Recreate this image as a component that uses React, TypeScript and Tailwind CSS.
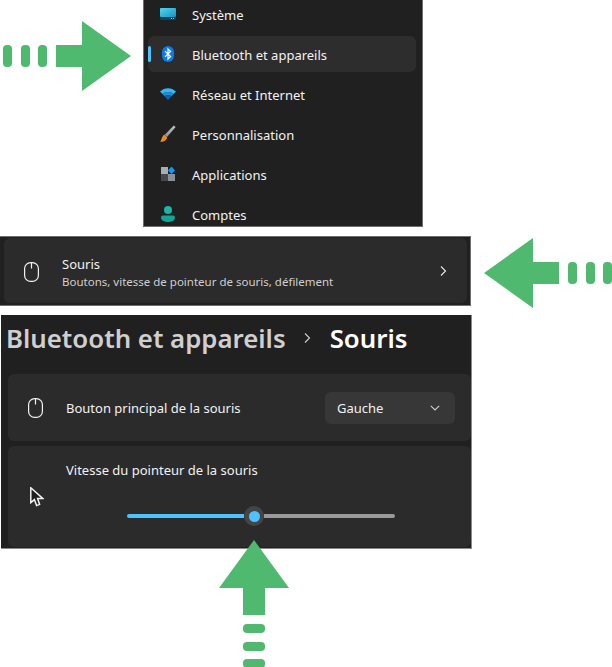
const font = "font-['Noto_Sans',sans-serif]";

function RightArrow() {
  return (
    <svg width="128" height="70" viewBox="0 0 128 70" className="shrink-0">
      <g fill="#4fb96f">
        <rect x="0" y="24" width="9" height="22" rx="4" />
        <rect x="18" y="24" width="9" height="22" rx="4" />
        <rect x="35" y="24" width="9" height="22" rx="4" />
        <path d="M53 24H79V0L128 35 79 70V46H53Z" />
      </g>
    </svg>
  );
}

function LeftArrow() {
  return (
    <svg width="128" height="70" viewBox="0 0 128 70" className="shrink-0">
      <g fill="#4fb96f">
        <rect x="119" y="24" width="9" height="22" rx="4" />
        <rect x="102" y="24" width="9" height="22" rx="4" />
        <rect x="84" y="24" width="9" height="22" rx="4" />
        <path d="M75 24H49V0L0 35 49 70V46H75Z" />
      </g>
    </svg>
  );
}

function UpArrow() {
  return (
    <svg width="70" height="128" viewBox="0 0 70 128" className="shrink-0">
      <g fill="#4fb96f">
        <path d="M24 75V48H0L35 0 70 48H46V75Z" />
        <rect x="24" y="84" width="22" height="9" rx="4" />
        <rect x="24" y="102" width="22" height="9" rx="4" />
        <rect x="24" y="119" width="22" height="9" rx="4" />
      </g>
    </svg>
  );
}

function SystemIcon() {
  return (
    <svg width="16" height="16" viewBox="0 0 16 16">
      <defs>
        <linearGradient id="sys" x1="0" y1="0" x2="1" y2="1">
          <stop offset="0" stopColor="#4fd8ec" />
          <stop offset="1" stopColor="#1793c9" />
        </linearGradient>
      </defs>
      <rect x="0" y="2" width="16" height="9" rx="1" fill="url(#sys)" />
      <path d="M0 11H16V13a1 1 0 0 1-1 1H1a1 1 0 0 1-1-1Z" fill="#0f4560" />
      <rect x="11" y="12" width="1" height="1" fill="#6fc5e6" />
      <rect x="13" y="12" width="1" height="1" fill="#6fc5e6" />
    </svg>
  );
}

function BluetoothIcon() {
  return (
    <svg width="16" height="16" viewBox="0 0 16 16">
      <rect x="2" y="0" width="12" height="16" rx="6" fill="#0a7be8" />
      <path d="M5 5.2 10.6 10.4 8 13V3L10.6 5.6 5 10.8" fill="none" stroke="#fff" strokeWidth="1.2" />
    </svg>
  );
}

function WifiIcon() {
  return (
    <svg width="16" height="16" viewBox="0 0 16 16">
      <path d="M0 5.5C4.5 1 11.5 1 16 5.5L13.6 8C10.4 5.2 5.6 5.2 2.4 8Z" fill="#35b8f2" />
      <path d="M2.4 8C5.6 5.2 10.4 5.2 13.6 8L11.5 10.2C9.4 8.6 6.6 8.6 4.5 10.2Z" fill="#1b8fdc" />
      <path d="M4.5 10.2C6.6 8.6 9.4 8.6 11.5 10.2L8 14Z" fill="#0c62b4" />
    </svg>
  );
}

function BrushIcon() {
  return (
    <svg width="16" height="18" viewBox="0 0 16 18">
      <defs>
        <linearGradient id="brush" x1="0" y1="1" x2="1" y2="0">
          <stop offset="0" stopColor="#8a8f94" />
          <stop offset="1" stopColor="#c4c6c8" />
        </linearGradient>
      </defs>
      <path d="M13.8 0.4 15.6 2 7 12 4.8 9.8Z" fill="url(#brush)" />
      <path d="M4.4 9.4 7.2 12.4C6.6 15.4 3 17.2 0 16.8 1.8 15.4 1.6 11 4.4 9.4Z" fill="#f08a1c" />
    </svg>
  );
}

function AppsIcon() {
  return (
    <svg width="14" height="14" viewBox="0 0 14 14">
      <rect x="0" y="0" width="7" height="7" fill="#a8adb2" />
      <rect x="0" y="7" width="7" height="7" fill="#45494d" />
      <rect x="7" y="7" width="7" height="7" fill="#8a9096" />
      <path d="M10.5 -0.5 14 3.5 10.5 7 7 3.5Z" fill="#1a96ea" />
    </svg>
  );
}

function AccountIcon() {
  return (
    <svg width="14" height="16" viewBox="0 0 14 16">
      <circle cx="7" cy="4" r="4" fill="#1cb5a5" />
      <path d="M2 9.5H12a2 2 0 0 1 2 2C14 14.5 10.5 16 7 16S0 14.5 0 11.5a2 2 0 0 1 2-2Z" fill="#12a594" />
    </svg>
  );
}

function MouseIcon() {
  return (
    <svg width="15" height="20" viewBox="0 0 15 20" fill="none" stroke="#f2f2f2" strokeWidth="1.2" className="shrink-0">
      <rect x="0.6" y="0.6" width="13.8" height="18.8" rx="6" />
      <path d="M7.5 0.6V6.5" />
    </svg>
  );
}

function PointerIcon() {
  return (
    <svg width="14" height="20" viewBox="0 0 14 20" fill="#1f1f1f" stroke="#f2f2f2" strokeWidth="1.5" className="shrink-0">
      <path d="M0.8 0.8V15.6L4.4 12.6 6.6 18.6 9.6 17.4 7.6 11.6H13Z" />
    </svg>
  );
}

function Chevron({ size = 10 }: { size?: number }) {
  return (
    <svg width={size} height={size} viewBox="0 0 10 10" fill="none" stroke="currentColor" strokeWidth="1.1" className="shrink-0">
      <path d="M3 0.5 7.5 5 3 9.5" />
    </svg>
  );
}

const navItems = [
  { label: "Système", icon: <SystemIcon /> },
  { label: "Bluetooth et appareils", icon: <BluetoothIcon />, active: true },
  { label: "Réseau et Internet", icon: <WifiIcon /> },
  { label: "Personnalisation", icon: <BrushIcon /> },
  { label: "Applications", icon: <AppsIcon /> },
  { label: "Comptes", icon: <AccountIcon /> },
];

export default function App() {
  return (
    <div className={`${font} w-[612px] h-[667px] overflow-hidden bg-white text-[#f2f2f2]`}>
      {/* Settings nav with first arrow */}
      <div className="flex items-start h-[236px]">
        <div className="ml-[3px] mt-[21px]">
          <RightArrow />
        </div>
        <div className="ml-[12px] w-[280px] h-[227px] overflow-hidden border border-[#6f6f6f] border-t-0 bg-[#202020]">
          <div className="-mt-[4px] ml-[4px] mr-[6px] flex flex-col gap-[4px]">
            {navItems.map((item) => (
              <div
                key={item.label}
                className={`relative flex h-[36px] shrink-0 items-center gap-[16px] rounded-md pl-[12px] ${item.active ? "bg-[#2d2d2d]" : ""}`}
              >
                {item.active && <div className="absolute left-0 top-[10px] h-[16px] w-[3px] rounded-full bg-[#4cc2ff]" />}
                <div className="flex w-[16px] justify-center">{item.icon}</div>
                <span className="mt-[2px] text-[13px] leading-[20px]">{item.label}</span>
              </div>
            ))}
          </div>
        </div>
      </div>

      {/* Souris row with second arrow */}
      <div className="flex items-start h-[79px]">
        <div className="w-[471px] h-[70px] border border-[#6f6f6f] border-l-0 bg-[#202020] pt-[1px] pl-[4px] pr-[3px] pb-[2px]">
          <div className="flex h-full items-center rounded-md bg-[#2b2b2b] pl-[20px] pr-[19px]">
            <div className="mt-[2px]">
              <MouseIcon />
            </div>
            <div className="ml-[23px] flex flex-col pt-[3px]">
              <span className="text-[13px] leading-[18px]">Souris</span>
              <span className="text-[11.5px] leading-[17px] text-[#cfcfcf]">Boutons, vitesse de pointeur de souris, défilement</span>
            </div>
            <div className="ml-auto text-[#e8e8e8]">
              <Chevron />
            </div>
          </div>
        </div>
        <div className="ml-[13px] mt-[2px]">
          <LeftArrow />
        </div>
      </div>

      {/* Mouse settings page */}
      <div className="ml-[1px] w-[471px] h-[234px] border-r border-b border-[#8a8a8a] bg-[#202020]">
        <div className="mb-[13px] flex h-[46px] items-center pl-[5px] text-[25.8px] font-semibold leading-[34px]">
          <span className="text-[#cfcfcf]">Bluetooth et appareils</span>
          <span className="ml-[16px] text-[#cfcfcf]">
            <Chevron />
          </span>
          <span className="ml-[18px] text-white">Souris</span>
        </div>
        <div className="ml-[7px] flex w-[463px] flex-col gap-[5px]">
          <div className="flex h-[67px] items-center rounded-md bg-[#2b2b2b] pl-[20px] pr-[16px]">
            <MouseIcon />
            <span className="ml-[23px] text-[13px] leading-[20px]">Bouton principal de la souris</span>
            <div className="ml-auto flex h-[32px] w-[130px] items-center rounded-md bg-[#373737] pl-[12px] pr-[15px] text-[13px]">
              <span className="mt-[2px]">Gauche</span>
              <svg width="10" height="6" viewBox="0 0 10 6" fill="none" stroke="#cfcfcf" strokeWidth="1.1" className="ml-auto">
                <path d="M0.8 0.8 5 5 9.2 0.8" />
              </svg>
            </div>
          </div>
          <div className="flex h-[101px] rounded-md bg-[#2b2b2b] pl-[22px]">
            <div className="mt-[41px]">
              <PointerIcon />
            </div>
            <div className="ml-[22px] flex flex-col">
              <span className="mt-[14px] text-[13px] leading-[20px]">Vitesse du pointeur de la souris</span>
              <div className="ml-[61px] mt-[26px] flex w-[268px] items-center">
                <div className="h-[4px] w-[117px] rounded-l-full bg-[#4cc2ff]" />
                <div className="flex h-[20px] w-[20px] shrink-0 items-center justify-center rounded-full bg-[#454545]">
                  <div className="h-[11px] w-[11px] rounded-full bg-[#4cc2ff]" />
                </div>
                <div className="h-[4px] flex-1 rounded-r-full bg-[#9a9a9a]" />
              </div>
            </div>
          </div>
        </div>
      </div>

      {/* Third arrow, its tip lies over the panel */}
      <div className="relative z-10 -mt-[9px] ml-[219px] w-[70px]">
        <UpArrow />
      </div>
    </div>
  );
}
